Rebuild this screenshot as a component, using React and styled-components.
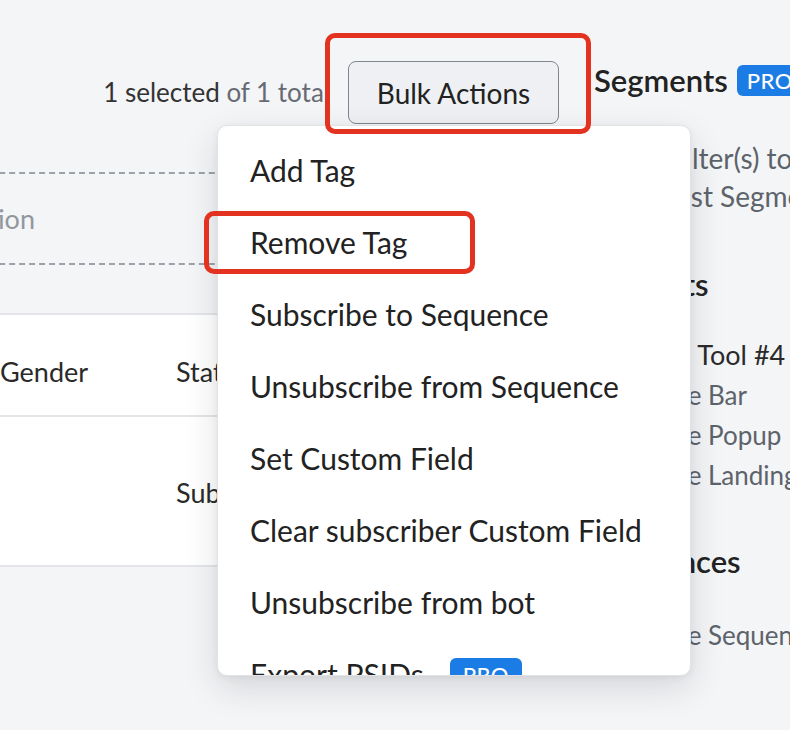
import React from "react";
import styled, { createGlobalStyle } from "styled-components";

const Global = createGlobalStyle`
  html, body { margin: 0; padding: 0; }
  body {
    background: #f4f5f7;
    font-family: Lato, "Open Sans", sans-serif;
    color: #2a2a2a;
    overflow: hidden;
  }
`;

const Page = styled.div`
  position: relative;
  width: 790px;
  height: 730px;
  overflow: hidden;
  display: grid;
  grid-template-columns: 594px 1fr;
`;

const MainClip = styled.div`
  overflow: hidden;
`;

const Main = styled.div`
  width: 994px;
  margin-left: -400px;
  display: flex;
  flex-direction: column;
`;

const Toolbar = styled.div`
  height: 124px;
  display: flex;
  align-items: flex-end;
  justify-content: flex-end;
  gap: 18px;
  padding-right: 35px;
`;

const Count = styled.div`
  font-size: 26px;
  color: #333;
  height: 63px;
  line-height: 63px;
  white-space: nowrap;
`;

const Muted = styled.span`
  color: #666b73;
`;

const BulkButton = styled.button`
  width: 211px;
  height: 63px;
  border: 1.5px solid #80868d;
  border-radius: 8px;
  background: #eef0f3;
  font-family: inherit;
  font-size: 28px;
  color: #222;
  padding: 0;
`;

const DropZone = styled.div`
  margin-top: 48px;
  height: 89px;
  border-top: 2px dashed #9ca2aa;
  border-bottom: 2px dashed #9ca2aa;
  display: flex;
  align-items: center;
`;

const Placeholder = styled.div`
  width: 435px;
  text-align: right;
  white-space: nowrap;
  font-size: 27px;
  color: #92979e;
`;

const Table = styled.div`
  margin-top: 48px;
  background: #fff;
  border-top: 2px solid #e4e5e8;
  border-bottom: 2px solid #e4e5e8;
`;

const Row = styled.div`
  display: grid;
  grid-template-columns: 400px 176px 1fr;
  align-items: center;
  height: ${(p) => p.$h}px;
  border-top: ${(p) => (p.$divider ? "2px solid #e4e5e8" : "none")};
`;

const Cell = styled.div`
  font-size: 27px;
  color: #2a2a2a;
  white-space: nowrap;
  padding-top: ${(p) => p.$pt || 0}px;
`;

const Sidebar = styled.div`
  display: flex;
  flex-direction: column;
  white-space: nowrap;
  overflow: hidden;
`;

const SideTitle = styled.div`
  display: flex;
  align-items: center;
  gap: 9px;
  margin-top: ${(p) => p.$mt}px;
  font-size: 31px;
  font-weight: 600;
  color: #222;
  height: 40px;
`;

const Badge = styled.span`
  display: inline-flex;
  align-items: center;
  justify-content: center;
  background: #1b7ce6;
  color: #fff;
  font-size: ${(p) => p.$fs || 22}px;
  font-weight: 500;
  border-radius: 6px;
  height: ${(p) => p.$h || 31}px;
  padding: 0 ${(p) => p.$px || 10}px;
  letter-spacing: 0.5px;
`;

const SideText = styled.div`
  font-size: ${(p) => p.$fs || 28}px;
  line-height: ${(p) => p.$lh || 38}px;
  color: ${(p) => (p.$dark ? "#2a2a2a" : "#5d636b")};
  margin-top: ${(p) => p.$mt || 0}px;
  white-space: pre;
`;

const Menu = styled.div`
  position: absolute;
  left: 217px;
  top: 125px;
  width: 474px;
  height: 551px;
  background: #fff;
  border-radius: 10px;
  border: 1px solid #e2e3e6;
  box-sizing: border-box;
  box-shadow: 0 12px 34px rgba(30, 35, 45, 0.14), 0 2px 6px rgba(30, 35, 45, 0.06);
  overflow: hidden;
  padding-top: 8px;
`;

const MenuItem = styled.div`
  height: 72px;
  display: flex;
  align-items: center;
  gap: 26px;
  padding-left: 32px;
  font-size: 30px;
  color: #222;
  white-space: nowrap;
`;

const Annotation = styled.div`
  position: absolute;
  left: ${(p) => p.$x}px;
  top: ${(p) => p.$y}px;
  width: ${(p) => p.$w}px;
  height: ${(p) => p.$h}px;
  border: 5px solid #e3321f;
  border-radius: 10px;
  box-sizing: border-box;
  pointer-events: none;
`;

const items = [
  "Add Tag",
  "Remove Tag",
  "Subscribe to Sequence",
  "Unsubscribe from Sequence",
  "Set Custom Field",
  "Clear subscriber Custom Field",
  "Unsubscribe from bot",
];

export default function App() {
  return (
    <>
      <Global />
      <Page>
        <MainClip>
          <Main>
            <Toolbar>
              <Count>
                1 selected <Muted>of 1 total</Muted>
              </Count>
              <BulkButton>Bulk Actions</BulkButton>
            </Toolbar>
            <DropZone>
              <Placeholder>Drop a filter here to add a condition</Placeholder>
            </DropZone>
            <Table>
              <Row $h={100}>
                <Cell />
                <Cell $pt={12}>Gender</Cell>
                <Cell $pt={12}>Status</Cell>
              </Row>
              <Row $h={148} $divider>
                <Cell />
                <Cell />
                <Cell $pt={2}>Subscribed</Cell>
              </Row>
            </Table>
          </Main>
        </MainClip>
        <Sidebar>
          <SideTitle $mt={60}>
            Segments <Badge>PRO</Badge>
          </SideTitle>
          <SideText $mt={39}>Select filter(s) to</SideText>
          <SideText>create list Segment</SideText>
          <SideTitle $mt={49}>Widgets</SideTitle>
          <SideText $dark $fs={27} $mt={31} $lh={40}>
            {"Growth\u2002Tool #4"}
          </SideText>
          <SideText $fs={26} $lh={40}>Welcome Bar</SideText>
          <SideText $fs={26} $lh={40}>Welcome Popup</SideText>
          <SideText $fs={26} $lh={40}>Welcome Landing</SideText>
          <SideTitle $mt={46}>Sequences</SideTitle>
          <SideText $fs={26} $mt={35}>Welcome Sequence</SideText>
        </Sidebar>

        <Menu>
          {items.map((t) => (
            <MenuItem key={t}>{t}</MenuItem>
          ))}
          <MenuItem>
            Export PSIDs <Badge $fs={22} $h={32} $px={13}>PRO</Badge>
          </MenuItem>
        </Menu>

        <Annotation $x={325} $y={33} $w={266} $h={101} />
        <Annotation $x={204} $y={211} $w={271} $h={63} />
      </Page>
    </>
  );
}
